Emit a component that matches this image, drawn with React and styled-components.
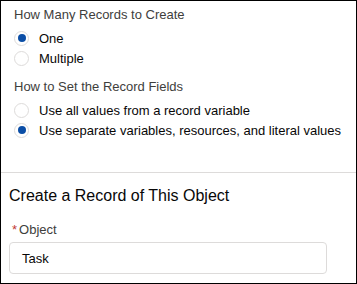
import styled, { createGlobalStyle } from "styled-components";

const GlobalStyle = createGlobalStyle`
  html, body {
    margin: 0;
    padding: 0;
    background: #fff;
  }
  body {
    font-family: "Liberation Sans", Arial, sans-serif;
    color: #080707;
  }
`;

const Panel = styled.div`
  width: 357px;
  height: 284px;
  box-sizing: border-box;
  border: 1px solid #000;
  display: flex;
  flex-direction: column;
  background: #fff;
`;

const Section = styled.div`
  padding: 5px 4px 0 13px;
`;

const GroupHeading = styled.div`
  font-size: 13px;
  line-height: 18px;
  color: #3e3e3c;
  margin-top: ${(p) => (p.$first ? "0" : "10px")};
  margin-bottom: 4px;
`;

const RadioRow = styled.label`
  display: flex;
  align-items: center;
  height: 20px;
  gap: 10px;
  font-size: 13px;
  color: #080707;
  white-space: nowrap;
`;

const RadioCircle = styled.span`
  width: 15px;
  height: 15px;
  box-sizing: border-box;
  border: 1px solid #dddbda;
  border-radius: 50%;
  display: flex;
  align-items: center;
  justify-content: center;
  flex-shrink: 0;
  &::after {
    content: "";
    width: 8px;
    height: 8px;
    border-radius: 50%;
    background: ${(p) => (p.$checked ? "#0b4ea6" : "transparent")};
  }
`;

const Divider = styled.hr`
  border: none;
  border-top: 1px solid #dddbda;
  margin: 32px 0 0 0;
`;

const ObjectSection = styled.div`
  padding: 11px 29px 0 8px;
`;

const SectionTitle = styled.div`
  font-size: 16px;
  line-height: 24px;
  color: #080707;
`;

const FieldLabel = styled.div`
  margin-top: 13px;
  font-size: 13px;
  line-height: 18px;
  color: #3e3e3c;
  padding-left: 3px;
`;

const Required = styled.abbr`
  color: #c23934;
  text-decoration: none;
  margin-right: 2px;
`;

const Input = styled.div`
  margin-top: 3px;
  height: 32px;
  box-sizing: border-box;
  border: 1px solid #dddbda;
  border-radius: 4px;
  padding-left: 12px;
  display: flex;
  align-items: center;
  font-size: 13px;
  color: #080707;
`;

function Radio({ checked, label }) {
  return (
    <RadioRow>
      <RadioCircle $checked={checked} />
      {label}
    </RadioRow>
  );
}

export default function App() {
  return (
    <>
      <GlobalStyle />
      <Panel>
        <Section>
          <GroupHeading $first>How Many Records to Create</GroupHeading>
          <Radio checked label="One" />
          <Radio label="Multiple" />
          <GroupHeading>How to Set the Record Fields</GroupHeading>
          <Radio label="Use all values from a record variable" />
          <Radio checked label="Use separate variables, resources, and literal values" />
        </Section>
        <Divider />
        <ObjectSection>
          <SectionTitle>Create a Record of This Object</SectionTitle>
          <FieldLabel>
            <Required title="required">*</Required>Object
          </FieldLabel>
          <Input>Task</Input>
        </ObjectSection>
      </Panel>
    </>
  );
}
